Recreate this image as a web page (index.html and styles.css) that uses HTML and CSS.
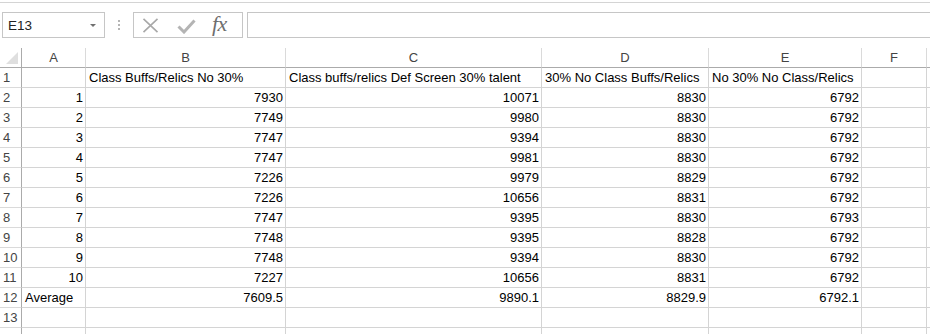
FILE: index.html
```html
<!DOCTYPE html>
<html>
<head>
<meta charset="utf-8">
<link rel="stylesheet" href="styles.css">
</head>
<body>
<div class="app">
  <div class="ribbon-edge"></div>
  <div class="formula-bar">
    <div class="name-box">
      <span class="name-text">E13</span>
      <span class="name-arrow"></span>
    </div>
    <div class="grip"><span></span><span></span><span></span></div>
    <div class="fx-buttons">
      <svg class="icon-x" width="17" height="15" viewBox="0 0 17 15"><path d="M1.5 0.8 L15.5 14.2 M15.5 0.8 L1.5 14.2" stroke="#a8a8a8" stroke-width="1.6" fill="none"/></svg>
      <svg class="icon-check" width="19" height="15" viewBox="0 0 19 15"><path d="M1.5 7.5 L7 13 L17.5 1.5" stroke="#b4b4b4" stroke-width="3" fill="none"/></svg>
      <span class="fx-label">fx</span>
    </div>
    <div class="formula-input"></div>
  </div>
  <div class="sheet">
    <div class="corner"><span class="tri"></span></div>
    <div class="h">A</div><div class="h">B</div><div class="h">C</div><div class="h">D</div><div class="h">E</div><div class="h">F</div><div class="h end"></div>

    <div class="r">1</div><div class="c"></div><div class="c">Class Buffs/Relics No 30%</div><div class="c">Class buffs/relics Def Screen 30% talent</div><div class="c">30% No Class Buffs/Relics</div><div class="c">No 30% No Class/Relics</div><div class="c"></div><div class="c end"></div>

    <div class="r">2</div><div class="c n">1</div><div class="c n">7930</div><div class="c n">10071</div><div class="c n">8830</div><div class="c n">6792</div><div class="c"></div><div class="c end"></div>
    <div class="r">3</div><div class="c n">2</div><div class="c n">7749</div><div class="c n">9980</div><div class="c n">8830</div><div class="c n">6792</div><div class="c"></div><div class="c end"></div>
    <div class="r">4</div><div class="c n">3</div><div class="c n">7747</div><div class="c n">9394</div><div class="c n">8830</div><div class="c n">6792</div><div class="c"></div><div class="c end"></div>
    <div class="r">5</div><div class="c n">4</div><div class="c n">7747</div><div class="c n">9981</div><div class="c n">8830</div><div class="c n">6792</div><div class="c"></div><div class="c end"></div>
    <div class="r">6</div><div class="c n">5</div><div class="c n">7226</div><div class="c n">9979</div><div class="c n">8829</div><div class="c n">6792</div><div class="c"></div><div class="c end"></div>
    <div class="r">7</div><div class="c n">6</div><div class="c n">7226</div><div class="c n">10656</div><div class="c n">8831</div><div class="c n">6792</div><div class="c"></div><div class="c end"></div>
    <div class="r">8</div><div class="c n">7</div><div class="c n">7747</div><div class="c n">9395</div><div class="c n">8830</div><div class="c n">6793</div><div class="c"></div><div class="c end"></div>
    <div class="r">9</div><div class="c n">8</div><div class="c n">7748</div><div class="c n">9395</div><div class="c n">8828</div><div class="c n">6792</div><div class="c"></div><div class="c end"></div>
    <div class="r">10</div><div class="c n">9</div><div class="c n">7748</div><div class="c n">9394</div><div class="c n">8830</div><div class="c n">6792</div><div class="c"></div><div class="c end"></div>
    <div class="r">11</div><div class="c n">10</div><div class="c n">7227</div><div class="c n">10656</div><div class="c n">8831</div><div class="c n">6792</div><div class="c"></div><div class="c end"></div>
    <div class="r">12</div><div class="c">Average</div><div class="c n">7609.5</div><div class="c n">9890.1</div><div class="c n">8829.9</div><div class="c n">6792.1</div><div class="c"></div><div class="c end"></div>
    <div class="r">13</div><div class="c"></div><div class="c"></div><div class="c"></div><div class="c"></div><div class="c"></div><div class="c"></div><div class="c end"></div>
    <div class="r"></div><div class="c"></div><div class="c"></div><div class="c"></div><div class="c"></div><div class="c"></div><div class="c"></div><div class="c end"></div>
  </div>
</div>
</body>
</html>
```

FILE: styles.css
```css
* { box-sizing: border-box; }
html, body {
  margin: 0;
  padding: 0;
  background: #ffffff;
  overflow: hidden;
}
.app {
  width: 930px;
  height: 334px;
  overflow: hidden;
  font-family: "Liberation Sans", Arial, sans-serif;
  font-size: 13px;
  color: #000;
}
.ribbon-edge {
  height: 3px;
  border-bottom: 1px solid #d4d4d4;
}
.formula-bar {
  display: flex;
  align-items: center;
  height: 26px;
  margin-top: 9px;
  margin-bottom: 10px;
}
.name-box {
  margin-left: 2px;
  width: 103px;
  height: 26px;
  border: 1px solid #c6c6c6;
  display: flex;
  align-items: center;
  justify-content: space-between;
  padding: 0 8px 0 5px;
  color: #222;
}
.name-text { font-size: 13.5px; }
.name-arrow {
  width: 0;
  height: 0;
  border-left: 3.5px solid transparent;
  border-right: 3.5px solid transparent;
  border-top: 3.5px solid #707070;
  margin-top: 1px;
}
.grip {
  width: 28px;
  display: flex;
  flex-direction: column;
  align-items: center;
  gap: 2px;
}
.grip span {
  width: 2px;
  height: 2px;
  background: #b5b5b5;
}
.fx-buttons {
  width: 110px;
  height: 26px;
  border: 1px solid #c6c6c6;
  display: flex;
  align-items: center;
  padding-left: 8px;
}
.icon-check { margin-left: 18px; margin-top: 2px; }
.fx-label {
  margin-left: 16px;
  font-family: "Liberation Serif", "Times New Roman", serif;
  font-style: italic;
  font-size: 22px;
  color: #6e6e6e;
  letter-spacing: -0.5px;
  line-height: 1;
  margin-top: -2px;
}
.formula-input {
  flex: 1;
  height: 26px;
  margin-left: 4px;
  border: 1px solid #c6c6c6;
  border-right: none;
}
.sheet {
  display: grid;
  grid-template-columns: 22px 64px 200px 256px 167px 153px 65px 1fr;
  grid-auto-rows: 20px;
}
.corner {
  position: relative;
  border-right: 1px solid #ababab;
  border-bottom: 1px solid #ababab;
}
.tri {
  position: absolute;
  right: 3px;
  bottom: 3px;
  width: 0;
  height: 0;
  border-left: 12px solid transparent;
  border-bottom: 12px solid #dfdfdf;
}
.h {
  border-right: 1px solid #dadada;
  border-bottom: 1px solid #ababab;
  text-align: center;
  color: #444;
  line-height: 19px;
}
.r {
  border-right: 1px solid #ababab;
  border-bottom: 1px solid #dadada;
  color: #444;
  padding-left: 3px;
  line-height: 20px;
}
.c {
  border-right: 1px solid #d4d4d4;
  border-bottom: 1px solid #d4d4d4;
  padding: 0 3px;
  line-height: 20px;
  white-space: nowrap;
  overflow: hidden;
}
.n { text-align: right; padding-right: 2px; }
.end { border-right: none; }
```
